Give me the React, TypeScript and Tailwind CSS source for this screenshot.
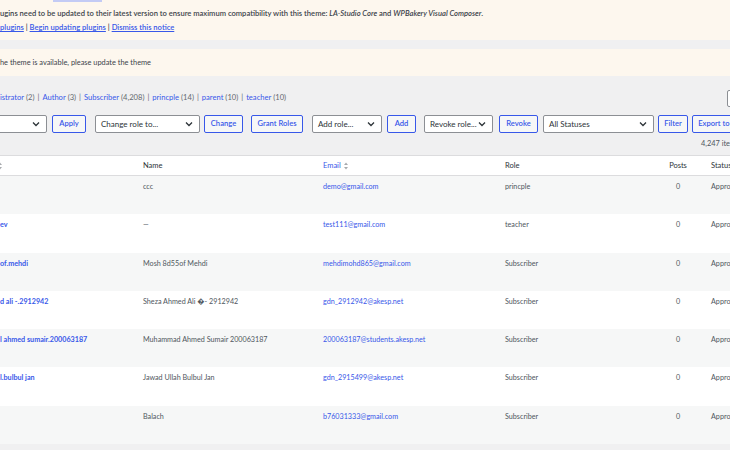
import React from "react";

const Chevron = () => (
  <svg width="8" height="6" viewBox="0 0 8 6" className="shrink-0">
    <path d="M1 1.5 L4 4.5 L7 1.5" fill="none" stroke="#2c3338" strokeWidth="1.3" />
  </svg>
);

const SortIcon = () => (
  <svg width="4" height="8" viewBox="0 0 4 8" className="shrink-0">
    <path d="M0 3 L2 0.5 L4 3 Z" fill="#a7aaad" />
    <path d="M0 5 L2 7.5 L4 5 Z" fill="#a7aaad" />
  </svg>
);

const Select = ({ w, label, ml = "" }: { w: string; label: string; ml?: string }) => (
  <div className={`${w} ${ml} h-[18px] bg-white border border-[#8c8f94] rounded-[2px] flex items-center justify-between pl-[5px] pr-[6px] text-[8px] text-[#2c3338] shrink-0`}>
    <span>{label}</span>
    <Chevron />
  </div>
);

const Btn = ({ w, label, ml = "" }: { w: string; label: string; ml?: string }) => (
  <div className={`${w} ${ml} h-[18px] bg-[#f6f7f7] border border-[#3858e9] rounded-[2px] flex items-center justify-center text-[7.6px] font-semibold text-[#3858e9] shrink-0 whitespace-nowrap`}>
    {label}
  </div>
);

type Row = { user: string; name: string; email: string; role: string };

const rows: Row[] = [
  { user: "", name: "ccc", email: "demo@gmail.com", role: "princple" },
  { user: "ev", name: "—", email: "test111@gmail.com", role: "teacher" },
  { user: "of.mehdi", name: "Mosh 8d55of Mehdi", email: "mehdimohd865@gmail.com", role: "Subscriber" },
  { user: "d ali -.2912942", name: "Sheza Ahmed Ali \uFFFD- 2912942", email: "gdn_2912942@akesp.net", role: "Subscriber" },
  { user: "l ahmed sumair.200063187", name: "Muhammad Ahmed Sumair 200063187", email: "200063187@students.akesp.net", role: "Subscriber" },
  { user: "l.bulbul jan", name: "Jawad Ullah Bulbul Jan", email: "gdn_2915499@akesp.net", role: "Subscriber" },
  { user: "", name: "Balach", email: "b76031333@gmail.com", role: "Subscriber" },
];

const filters: [string, string][] = [
  ["istrator", "(2)"],
  ["Author", "(3)"],
  ["Subscriber", "(4,208)"],
  ["princple", "(14)"],
  ["parent", "(10)"],
  ["teacher", "(10)"],
];

export default function App() {
  return (
    <div className="w-[730px] h-[450px] overflow-hidden bg-[#f0f0f1] font-['Lato','Open_Sans',sans-serif] text-[#3c434a]">
      {/* Notice 1 */}
      <div className="relative h-[40px] bg-[#fdf7ee] pt-[7px]">
        <div className="absolute left-[53px] top-0 w-[49px] h-[2px] bg-[#c3cbf5]" />
        <div className="text-[7.6px] font-semibold text-[#3c434a] whitespace-nowrap leading-[12px]">
          ugins need to be updated to their latest version to ensure maximum compatibility with this theme:{" "}
          <em>LA-Studio Core</em> and <em>WPBakery Visual Composer</em>.
        </div>
        <div className="mt-[2px] text-[7.6px] font-semibold whitespace-nowrap leading-[12px] text-[#3c434a]">
          <span className="text-[#3858e9] underline">plugins</span> |{" "}
          <span className="text-[#3858e9] underline">Begin updating plugins</span> |{" "}
          <span className="text-[#3858e9] underline">Dismiss this notice</span>
        </div>
      </div>
      <div className="h-[9px]" />
      {/* Notice 2 */}
      <div className="h-[27px] bg-[#fdf7ee] flex items-center text-[7.4px] text-[#3c434a] whitespace-nowrap">
        he theme is available, please update the theme
      </div>

      {/* role filters */}
      <div className="relative h-[38px] flex items-center text-[7.6px] whitespace-nowrap pt-[5px]">
        {filters.map(([l, c], i) => (
          <React.Fragment key={l}>
            {i > 0 && <span className="text-[#646970] mx-[3px]">|</span>}
            <span className="text-[#3858e9]">{l}</span>
            <span className="text-[#646970]">&nbsp;{c}</span>
          </React.Fragment>
        ))}
        <div className="absolute left-[727px] top-[14px] w-[20px] h-[17px] bg-white border border-[#8c8f94] rounded-[2px]" />
      </div>

      {/* toolbar */}
      <div className="flex items-center h-[18px] mt-[1px] ml-[-10px] whitespace-nowrap">
        <Select w="w-[57px]" label="" />
        <Btn w="w-[34px]" ml="ml-[5px]" label="Apply" />
        <Select w="w-[105px]" ml="ml-[9px]" label="Change role to..." />
        <Btn w="w-[39px]" ml="ml-[4px]" label="Change" />
        <Btn w="w-[52px]" ml="ml-[8px]" label="Grant Roles" />
        <Select w="w-[70px]" ml="ml-[9px]" label="Add role..." />
        <Btn w="w-[29px]" ml="ml-[5px]" label="Add" />
        <Select w="w-[69px]" ml="ml-[8px]" label="Revoke role..." />
        <Btn w="w-[39px]" ml="ml-[6px]" label="Revoke" />
        <Select w="w-[111px]" ml="ml-[5px]" label="All Statuses" />
        <Btn w="w-[30px]" ml="ml-[4px]" label="Filter" />
        <Btn w="w-[60px]" ml="ml-[4px]" label="Export to CSV" />
      </div>

      <div className="h-[22px] flex items-center pl-[701px] text-[7.4px] text-[#50575e] whitespace-nowrap">4,247 items</div>

      {/* table */}
      <div className="border-t border-[#dcdcde] bg-white">
        <div className="grid grid-cols-[143px_180px_182px_151px_44px_1fr] h-[20px] items-center text-[7.5px] text-[#2c3338] border-b border-[#dcdcde] whitespace-nowrap">
          <div className="ml-[-2px]"><SortIcon /></div>
          <div>Name</div>
          <div className="flex items-center gap-[3px] text-[#3858e9]">Email <SortIcon /></div>
          <div>Role</div>
          <div className="text-center">Posts</div>
          <div className="pl-[11px]">Status</div>
        </div>
        {rows.map((r, i) => (
          <div
            key={i}
            className={`grid grid-cols-[143px_180px_182px_151px_44px_1fr] h-[38.3px] pt-[6px] text-[7.2px] text-[#50575e] whitespace-nowrap ${i % 2 === 0 ? "bg-[#f6f7f7]" : "bg-white"}`}
          >
            <div className="font-bold text-[#3858e9]">{r.user}</div>
            <div>{r.name}</div>
            <div className="text-[#3858e9]">{r.email}</div>
            <div>{r.role}</div>
            <div className="text-center">0</div>
            <div className="pl-[11px]">Approved</div>
          </div>
        ))}
      </div>
    </div>
  );
}
